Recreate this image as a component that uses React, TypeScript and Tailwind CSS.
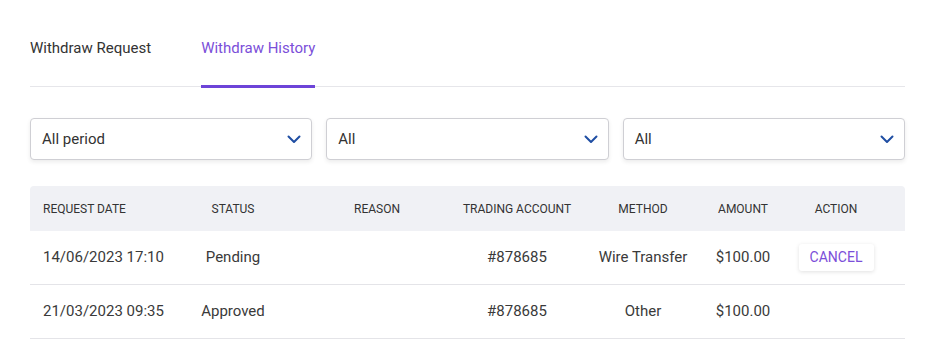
const rows = [
  { date: "14/06/2023 17:10", status: "Pending", reason: "", account: "#878685", method: "Wire Transfer", amount: "$100.00", cancel: true },
  { date: "21/03/2023 09:35", status: "Approved", reason: "", account: "#878685", method: "Other", amount: "$100.00", cancel: false },
];

const cols = "grid grid-cols-[149px_108px_180px_100px_152px_48px_138px]";

const Chevron = () => (
  <svg width="14" height="9" viewBox="0 0 14 9" fill="none">
    <path d="M1.5 1.5L7 7L12.5 1.5" stroke="#1f4ea3" strokeWidth="2" strokeLinecap="round" strokeLinejoin="round" />
  </svg>
);

const Select = ({ label }: { label: string }) => (
  <div className="flex-1 h-[42px] flex items-center justify-between pl-[11px] pr-[10px] border border-[#cfcfd4] rounded-[4px] bg-white shadow-[0_2px_4px_rgba(0,0,0,0.08)]">
    <span className="text-[15px] text-[#333]">{label}</span>
    <Chevron />
  </div>
);

const Center = ({ children }: { children: React.ReactNode }) => (
  <div className="flex justify-center items-center whitespace-nowrap">{children}</div>
);

export default function App() {
  return (
    <div className="bg-white w-[937px] h-[341px] pl-[30px] pr-[32px] font-['Roboto',sans-serif]">
      <div className="flex border-b border-[#e6e6ea] h-[87px]">
        <div className="text-[15px] text-[#333] pt-[37px]">Withdraw Request</div>
        <div className="ml-[50px] relative text-[15px] text-[#7b4fd9] pt-[37px]">
          Withdraw History
          <div className="absolute left-0 right-0 bottom-[-2px] h-[3px] bg-[#6d44d8]" />
        </div>
      </div>

      <div className="flex gap-[14px] mt-[31px]">
        <Select label="All period" />
        <Select label="All" />
        <Select label="All" />
      </div>

      <div className="mt-[26px]">
        <div className={`${cols} h-[45px] items-center bg-[#f0f1f5] rounded-t-[4px] text-[12px] text-[#333]`}>
          <div className="pl-[13px]">REQUEST DATE</div>
          <Center>STATUS</Center>
          <Center>REASON</Center>
          <Center>TRADING ACCOUNT</Center>
          <Center>METHOD</Center>
          <Center>AMOUNT</Center>
          <Center>ACTION</Center>
        </div>
        {rows.map((r, i) => (
          <div key={i} className={`${cols} h-[54px] items-center border-b border-[#e4e4e8] text-[15px] text-[#3a3a3a]`}>
            <div className="pl-[13px] whitespace-nowrap">{r.date}</div>
            <Center>{r.status}</Center>
            <Center>{r.reason}</Center>
            <Center>{r.account}</Center>
            <Center>{r.method}</Center>
            <Center>{r.amount}</Center>
            <Center>
              {r.cancel && (
                <div className="h-[27px] w-[75px] flex items-center justify-center rounded-[3px] bg-white shadow-[0_1px_4px_rgba(0,0,0,0.12)] text-[14px] text-[#7b4fd9]">
                  CANCEL
                </div>
              )}
            </Center>
          </div>
        ))}
      </div>
    </div>
  );
}
